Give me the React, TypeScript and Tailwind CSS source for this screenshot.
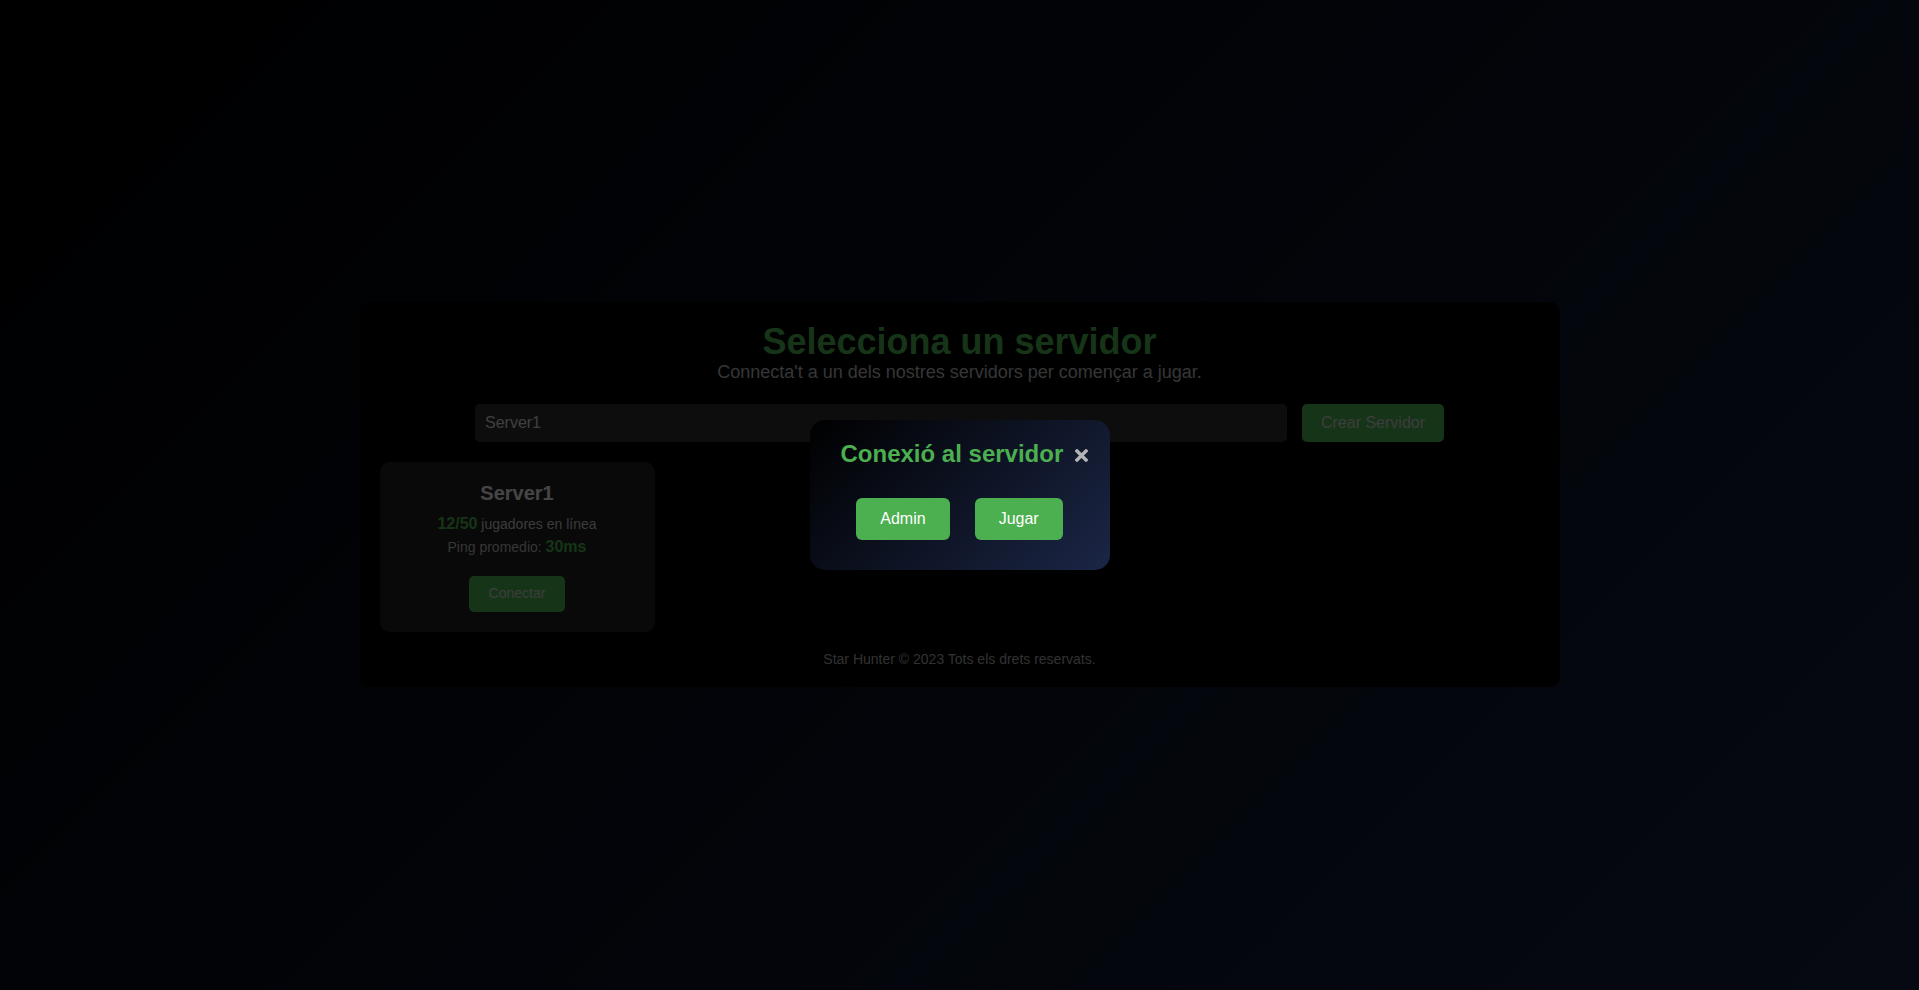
import { useState } from "react";

interface Server {
  name: string;
  players: number;
  max: number;
  ping: number;
}

const servers: Server[] = [{ name: "Server1", players: 12, max: 50, ping: 30 }];

export default function App() {
  const [name, setName] = useState("Server1");
  const [open, setOpen] = useState(true);

  return (
    <div className="relative flex min-h-screen items-center justify-center bg-[linear-gradient(135deg,#000000_0%,#141f3e_100%)] font-['Liberation_Sans',Arial,sans-serif]">
      <main className="mb-[2px] w-[1200px] rounded-[10px] bg-black/90 px-5 pt-[21px] pb-5 text-center">
        <h1 className="text-[36px] font-bold leading-[37px] text-[#4caf50]">Selecciona un servidor</h1>
        <p className="text-[18px] leading-[24px] text-[#b4b4b4]">
          Connecta't a un dels nostres servidors per començar a jugar.
        </p>

        <div className="mt-5 flex justify-center gap-[15px]">
          <input
            value={name}
            onChange={(e) => setName(e.target.value)}
            className="h-[38px] w-[812px] rounded-[5px] bg-[#2e2e2e] px-[10px] text-[16px] text-[#d4d4d4] outline-none"
          />
          <button className="h-[38px] rounded-[5px] bg-[#4caf50] px-[19px] text-[16px] text-[#cccccc]">
            Crear Servidor
          </button>
        </div>

        {/* server list */}
        <div className="mt-5 flex">
          {servers.map((s) => (
            <div key={s.name} className="w-[275px] rounded-[10px] bg-[#1e1e1e] px-5 pt-5 pb-5">
              <h3 className="text-[20px] font-bold leading-[23px] text-[#e6e6e6]">{s.name}</h3>
              <p className="mt-[10px] text-[14px] leading-[18px] text-[#c4c4c4]">
                <span className="text-[16px] font-bold text-[#4caf50]">
                  {s.players}/{s.max}
                </span>{" "}
                jugadores en línea
              </p>
              <p className="mt-[5px] text-[14px] leading-[18px] text-[#b4b4b4]">
                Ping promedio: <span className="text-[16px] font-bold text-[#4caf50]">{s.ping}ms</span>
              </p>
              <button
                onClick={() => setOpen(true)}
                className="mt-5 h-[36px] rounded-[5px] bg-[#4caf50] px-5 text-[14px] text-[#cccccc]"
              >
                Conectar
              </button>
            </div>
          ))}
        </div>

        <footer className="mt-[19px] text-[14px] leading-[16px] text-[#a4a4a4]">
          Star Hunter © 2023 Tots els drets reservats.
        </footer>
      </main>

      {open && (
        <div className="fixed inset-0 flex items-center justify-center bg-black/70">
          <div className="w-[300px] rounded-[15px] bg-[linear-gradient(135deg,#000000_0%,#1b2646_100%)] pt-5 pb-[30px]">
            <div className="flex items-center gap-[12px] pl-[31px]">
              <h2 className="text-[24px] font-bold leading-[28px] text-[#4caf50]">Conexió al servidor</h2>
              <button onClick={() => setOpen(false)} className="mt-[2px] text-[#b3b3b3]">
                <svg width="13" height="13" viewBox="0 0 13 13">
                  <path d="M2 2 L11 11 M11 2 L2 11" stroke="currentColor" strokeWidth="3.4" strokeLinecap="square" />
                </svg>
              </button>
            </div>
            <div className="mt-[30px] flex justify-center gap-[25px]">
              <button className="rounded-[6px] bg-[#4caf50] px-6 py-3 text-[16px] leading-[18px] text-white">Admin</button>
              <button className="rounded-[6px] bg-[#4caf50] px-6 py-3 text-[16px] leading-[18px] text-white">Jugar</button>
            </div>
          </div>
        </div>
      )}
    </div>
  );
}
